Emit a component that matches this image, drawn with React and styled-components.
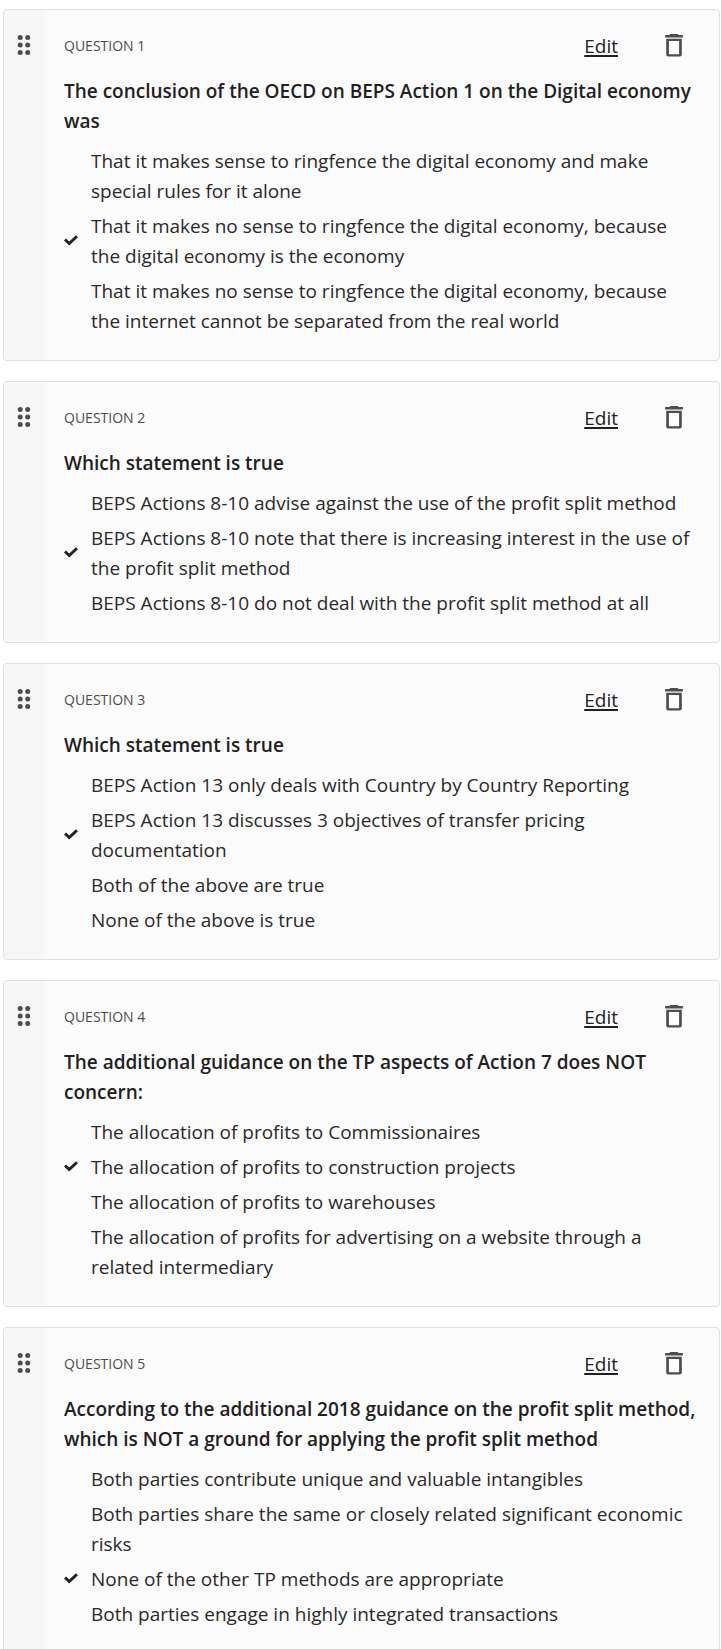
import React from 'react';
import styled, { createGlobalStyle, css } from 'styled-components';

const GlobalStyle = createGlobalStyle`
  * {
    box-sizing: border-box;
  }

  body {
    margin: 0;
    background: #ffffff;
    color: #212121;
    font-family: 'Open Sans', 'Noto Sans', sans-serif;
    font-size: 19px;
    line-height: 30px;
  }
`;

const QuestionList = styled.main`
  display: flex;
  flex-direction: column;
  gap: 20px;
  padding: 9px 1px 20px 3px;
`;

const Card = styled.section`
  display: flex;
  overflow: hidden;
  border: 1px solid #e0e0e0;
  border-radius: 4px;
  background: #fbfbfb;
`;

const iconButton = css`
  display: flex;
  padding: 0;
  border: 0;
  background: none;
  color: #4d4d4d;
  cursor: pointer;
`;

const DragHandle = styled.button`
  ${iconButton}
  flex: 0 0 40px;
  justify-content: center;
  padding-top: 23px;
  background: #f7f7f7;
  cursor: grab;
`;

const CardBody = styled.div`
  flex: 1;
  min-width: 0;
  padding: 20px 20px 24px;
`;

const CardHeader = styled.header`
  display: flex;
  align-items: center;
  height: 32px;
  margin-bottom: 14px;
`;

const Label = styled.span`
  flex: 1;
  color: #4d4d4d;
  font-size: 14px;
  font-weight: 500;
`;

const EditLink = styled.a`
  margin-right: 44px;
  color: #212121;
  font-weight: 500;
  text-decoration: underline;
  text-decoration-thickness: 2px;
  text-underline-offset: 2px;
`;

const DeleteButton = styled.button`
  ${iconButton}
  margin-right: 13px;
`;

const Title = styled.h2`
  margin: 0 0 10px;
  font-size: 19px;
  font-weight: 600;
`;

const Answers = styled.ul`
  display: flex;
  flex-direction: column;
  gap: 5px;
  margin: 0;
  padding: 0;
  color: #2a2a2a;
  list-style: none;
`;

const Answer = styled.li`
  display: flex;
  align-items: center;
`;

const Mark = styled.span`
  display: flex;
  flex: 0 0 27px;
  color: #212121;
`;

const DotsIcon = () => (
  <svg width="14" height="24" viewBox="0 0 14 24" fill="currentColor" aria-hidden="true">
    <circle cx="3.2" cy="4.5" r="2.5" />
    <circle cx="10.7" cy="4.5" r="2.5" />
    <circle cx="3.2" cy="12" r="2.5" />
    <circle cx="10.7" cy="12" r="2.5" />
    <circle cx="3.2" cy="19.5" r="2.5" />
    <circle cx="10.7" cy="19.5" r="2.5" />
  </svg>
);

const TrashIcon = () => (
  <svg width="24" height="24" viewBox="0 0 24 24" fill="currentColor" aria-hidden="true">
    <path d="M8 0.300Q8.400 -0.500 9.200 -0.500H14.800Q15.600 -0.500 16 0.300L16.600 1H20.900V3.400H3.100V1H7.400Z" />
    <path
      fillRule="evenodd"
      d="M4.200 4.700H19.800V20.600A2 2 0 0 1 17.800 22.600H6.200A2 2 0 0 1 4.200 20.600ZM6.900 7V20.200H17.100V7Z"
    />
  </svg>
);

const CheckIcon = () => (
  <svg width="14" height="12" viewBox="0 0 14 12" fill="none" role="img" aria-label="Correct">
    <path d="M1 4.500L5.200 8.600L13 1.200" stroke="currentColor" strokeWidth="2.900" />
  </svg>
);

const questions = [
  {
    title: 'The conclusion of the OECD on BEPS Action 1 on the Digital economy was',
    correct: 1,
    answers: [
      'That it makes sense to ringfence the digital economy and make special rules for it alone',
      'That it makes no sense to ringfence the digital economy, because the digital economy is the economy',
      'That it makes no sense to ringfence the digital economy, because the internet cannot be separated from the real world',
    ],
  },
  {
    title: 'Which statement is true',
    correct: 1,
    answers: [
      'BEPS Actions 8-10 advise against the use of the profit split method',
      'BEPS Actions 8-10 note that there is increasing interest in the use of the profit split method',
      'BEPS Actions 8-10 do not deal with the profit split method at all',
    ],
  },
  {
    title: 'Which statement is true',
    correct: 1,
    answers: [
      'BEPS Action 13 only deals with Country by Country Reporting',
      'BEPS Action 13 discusses 3 objectives of transfer pricing documentation',
      'Both of the above are true',
      'None of the above is true',
    ],
  },
  {
    title: 'The additional guidance on the TP aspects of Action 7 does NOT concern:',
    correct: 1,
    answers: [
      'The allocation of profits to Commissionaires',
      'The allocation of profits to construction projects',
      'The allocation of profits to warehouses',
      'The allocation of profits for advertising on a website through a related intermediary',
    ],
  },
  {
    title:
      'According to the additional 2018 guidance on the profit split method, which is NOT a ground for applying the profit split method',
    correct: 2,
    answers: [
      'Both parties contribute unique and valuable intangibles',
      'Both parties share the same or closely related significant economic risks',
      'None of the other TP methods are appropriate',
      'Both parties engage in highly integrated transactions',
    ],
  },
];

const Question = ({ number, title, answers, correct }) => (
  <Card>
    <DragHandle type="button" aria-label="Reorder">
      <DotsIcon />
    </DragHandle>
    <CardBody>
      <CardHeader>
        <Label>QUESTION {number}</Label>
        <EditLink href="#edit">Edit</EditLink>
        <DeleteButton type="button" aria-label="Delete">
          <TrashIcon />
        </DeleteButton>
      </CardHeader>
      <Title>{title}</Title>
      <Answers>
        {answers.map((answer, index) => (
          <Answer key={answer}>
            <Mark>{index === correct && <CheckIcon />}</Mark>
            <span>{answer}</span>
          </Answer>
        ))}
      </Answers>
    </CardBody>
  </Card>
);

const App = () => {
  return (
    <>
      <GlobalStyle />
      <QuestionList>
        {questions.map((question, index) => (
          <Question key={index} number={index + 1} {...question} />
        ))}
      </QuestionList>
    </>
  );
};

export default App;
